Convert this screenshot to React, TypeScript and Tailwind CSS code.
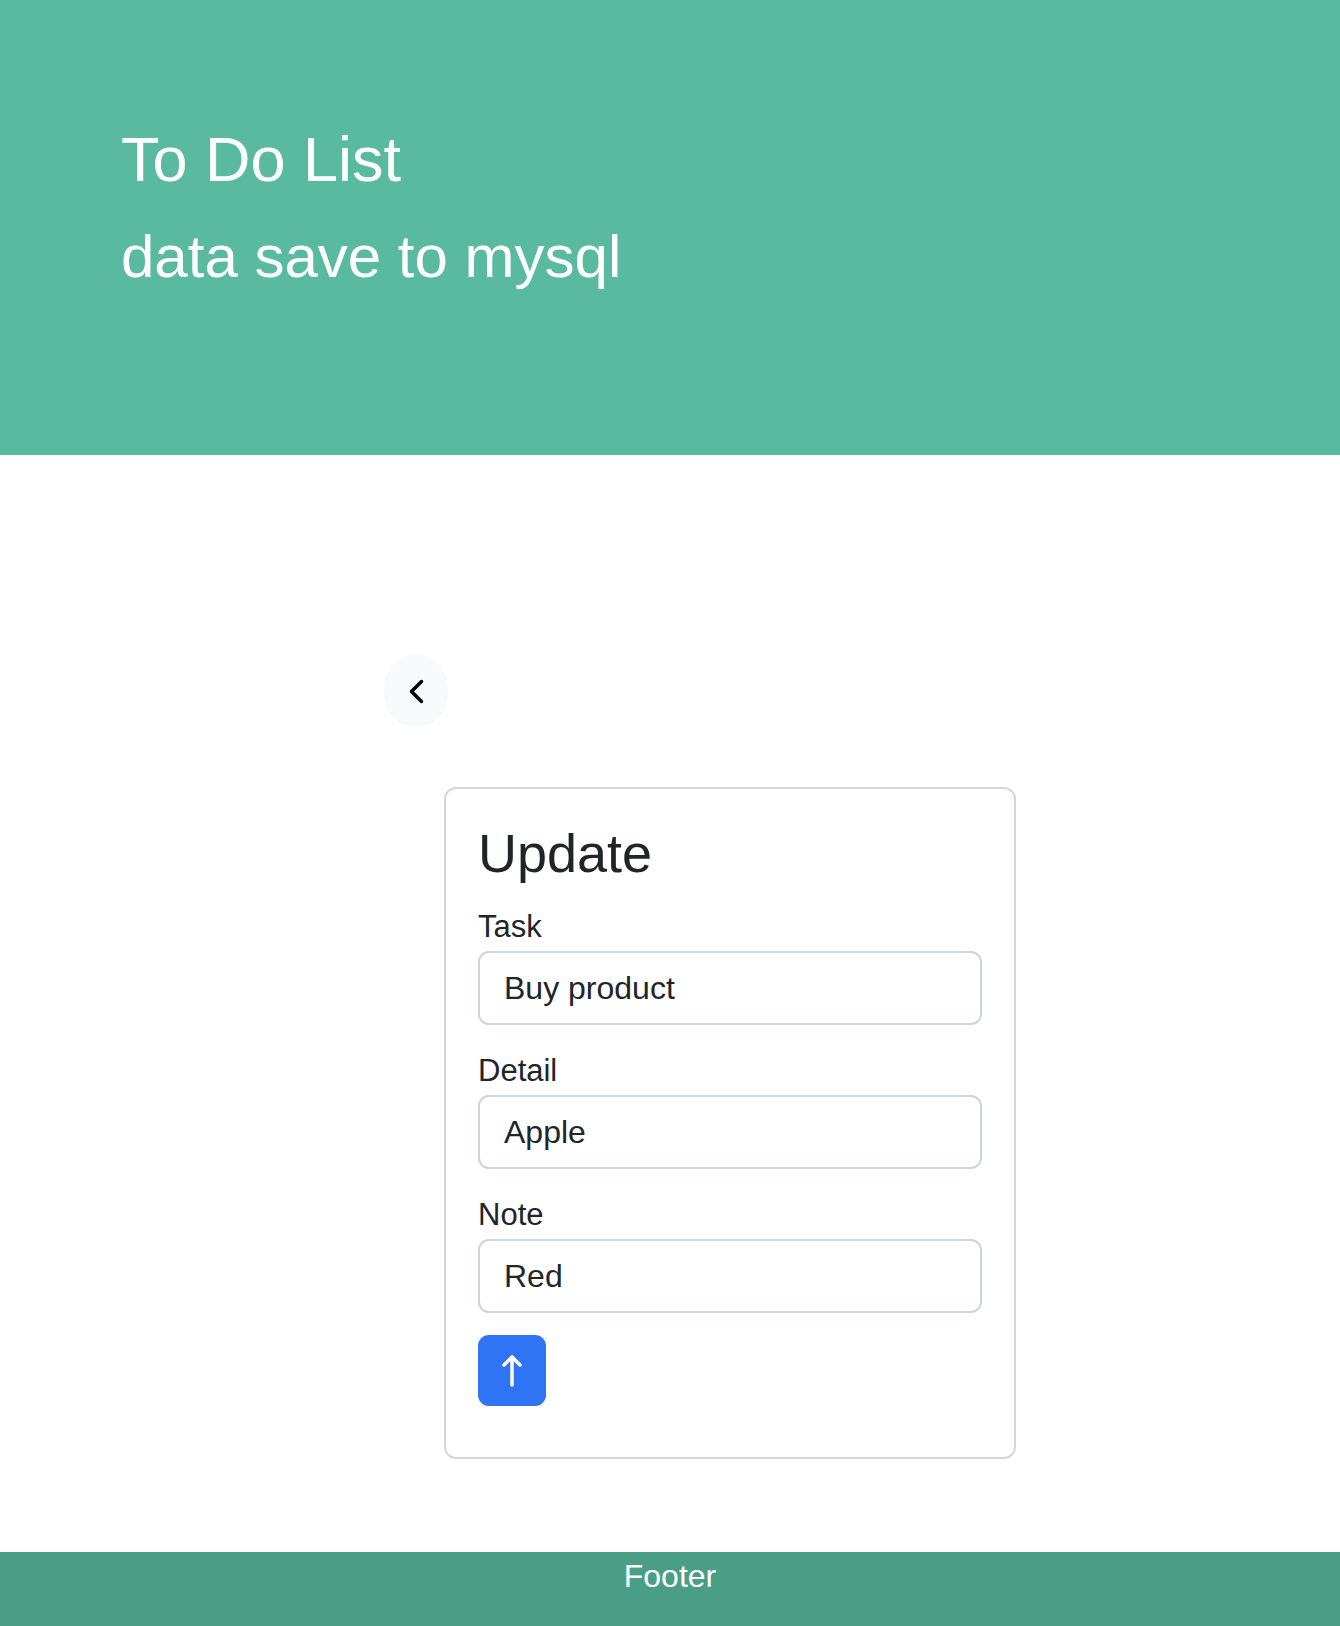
import React from "react";

export default function App() {
  return (
    <div
      className="w-[1340px] h-[1626px] bg-white flex flex-col overflow-hidden"
      style={{ fontFamily: '"Liberation Sans", Arial, Helvetica, sans-serif' }}
    >
      <header className="h-[455px] shrink-0 bg-[#5aba9f] pl-[121px] pt-[121px] text-white">
        <h1 className="text-[63px] leading-[76px] font-normal">To Do List</h1>
        <p className="mt-[24px] text-[60px] leading-[72px] font-normal">data save to mysql</p>
      </header>

      <main className="flex flex-col pt-[200px]">
        <button
          type="button"
          aria-label="Back"
          className="ml-[384px] w-[64px] h-[72px] rounded-full bg-[#f8f9fa] flex items-center justify-center"
        >
          <svg width="15" height="25" viewBox="0 0 15 25" fill="none">
            <polyline
              points="12.5,2.5 2.5,12.5 12.5,22.5"
              stroke="#000"
              strokeWidth="3.5"
              strokeLinecap="round"
              strokeLinejoin="round"
            />
          </svg>
        </button>

        <div className="mt-[60px] ml-[444px] w-[572px] border-2 border-[#d5d7d9] rounded-[12px] px-[32px] pt-[32px] pb-[51px] text-[#212529]">
          <h2 className="text-[54px] leading-[65px] font-normal">Update</h2>

          <div className="mt-[23px] flex flex-col">
            <label className="text-[31px] leading-[36px] mb-[6px]">Task</label>
            <input
              readOnly
              value="Buy product"
              className="h-[74px] w-full border-2 border-[#ced4da] rounded-[11px] px-[24px] text-[32px] text-[#212529] outline-none"
            />
          </div>

          <div className="mt-[28px] flex flex-col">
            <label className="text-[31px] leading-[36px] mb-[6px]">Detail</label>
            <input
              readOnly
              value="Apple"
              className="h-[74px] w-full border-2 border-[#ced4da] rounded-[11px] px-[24px] text-[32px] text-[#212529] outline-none"
            />
          </div>

          <div className="mt-[28px] flex flex-col">
            <label className="text-[31px] leading-[36px] mb-[6px]">Note</label>
            <input
              readOnly
              value="Red"
              className="h-[74px] w-full border-2 border-[#ced4da] rounded-[11px] px-[24px] text-[32px] text-[#212529] outline-none"
            />
          </div>

          <button
            type="button"
            aria-label="Update"
            className="mt-[22px] w-[68px] h-[71px] rounded-[11px] bg-[#2f74f4] flex items-center justify-center"
          >
            <svg width="22" height="32" viewBox="0 0 22 32" fill="none">
              <polyline
                points="3,10 11,2 19,10"
                stroke="#fff"
                strokeWidth="3.5"
                strokeLinecap="round"
                strokeLinejoin="round"
              />
              <line x1="11" y1="2" x2="11" y2="30" stroke="#fff" strokeWidth="3.5" strokeLinecap="round" />
            </svg>
          </button>
        </div>
      </main>

      <footer className="mt-[93px] h-[74px] shrink-0 bg-[#4a9e86] text-white text-center text-[32px] leading-[48px]">
        Footer
      </footer>
    </div>
  );
}
